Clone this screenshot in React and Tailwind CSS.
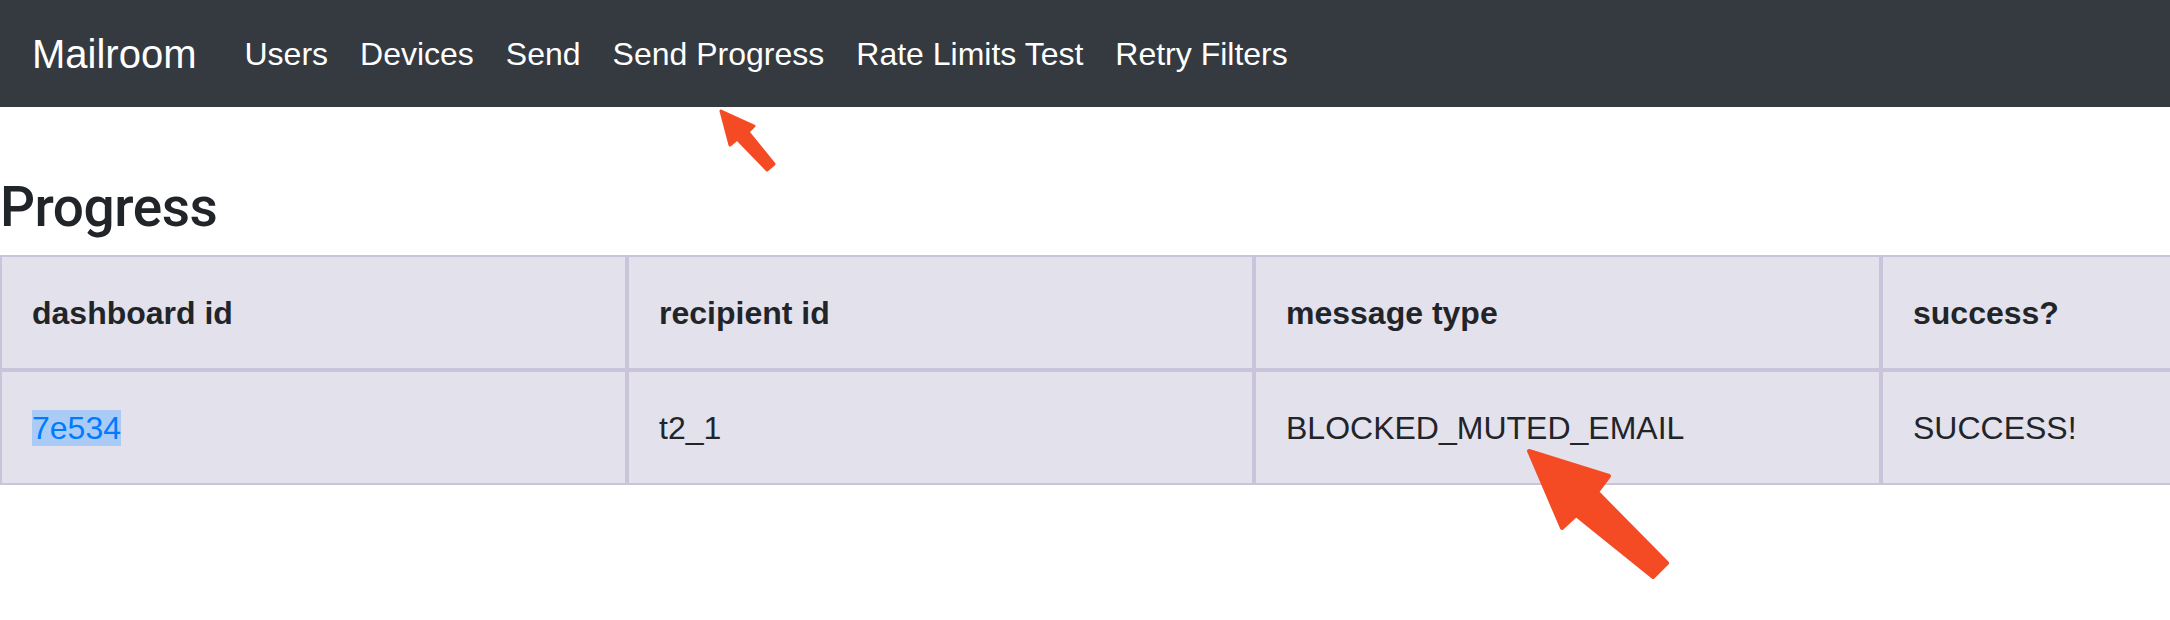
const NAV_LINKS = ['Users', 'Devices', 'Send', 'Send Progress', 'Rate Limits Test', 'Retry Filters']

const COLUMNS = ['dashboard id', 'recipient id', 'message type', 'success?']

const ROWS = [
  { dashboardId: '7e534', recipientId: 't2_1', messageType: 'BLOCKED_MUTED_EMAIL', success: 'SUCCESS!' },
]

const CELL = 'border-2 border-[#c9c4da] px-[30px] pt-[32px] pb-[31px] text-[32px] leading-[48px]'

function Arrows() {
  // annotation arrows drawn over the page
  return (
    <svg
      className="absolute left-0 top-0 pointer-events-none"
      width="2170"
      height="620"
      viewBox="0 0 2170 620"
    >
      <polygon
        points="721,111 754,126 748,132 774,164 767,170 737,139 730,145"
        fill="#f44b25"
        stroke="#f44b25"
        strokeWidth="3"
        strokeLinejoin="round"
      />
      <polygon
        points="1529,451 1609,476 1597,492 1667,563 1653,577 1576,515 1562,528"
        fill="#f44b25"
        stroke="#f44b25"
        strokeWidth="4"
        strokeLinejoin="round"
      />
    </svg>
  )
}

export default function App() {
  return (
    <div className="relative w-[2170px] h-[620px] overflow-hidden bg-white font-['Liberation_Sans',Arial,sans-serif] text-[#212529]">
      {/* Navbar */}
      <nav className="flex items-center h-[107px] px-[32px] bg-[#343a40] text-white">
        <span className="text-[40px] leading-[60px] mr-[32px]">Mailroom</span>
        <div className="flex items-center">
          {NAV_LINKS.map((link) => (
            <a key={link} className="px-[16px] text-[32px] leading-[48px] text-white">
              {link}
            </a>
          ))}
        </div>
      </nav>

      {/* Content */}
      <h3 className="mt-[67px] mb-[15px] font-['Roboto',Arial,sans-serif] text-[55px] leading-[66px] font-medium tracking-[-0.5px]">
        Progress
      </h3>

      <table className="border-separate border-spacing-0 bg-[#e3e1ec] table-fixed w-[2508px]">
        <thead>
          <tr>
            {COLUMNS.map((col) => (
              <th key={col} className={`w-[627px] box-border text-left font-bold ${CELL}`}>
                {col}
              </th>
            ))}
          </tr>
        </thead>
        <tbody>
          {ROWS.map((r) => (
            <tr key={r.dashboardId}>
              <td className={CELL}>
                <a className="bg-[#a9cbf5] text-[#007bff]">{r.dashboardId}</a>
              </td>
              <td className={CELL}>{r.recipientId}</td>
              <td className={CELL}>{r.messageType}</td>
              <td className={CELL}>{r.success}</td>
            </tr>
          ))}
        </tbody>
      </table>

      <Arrows />
    </div>
  )
}
